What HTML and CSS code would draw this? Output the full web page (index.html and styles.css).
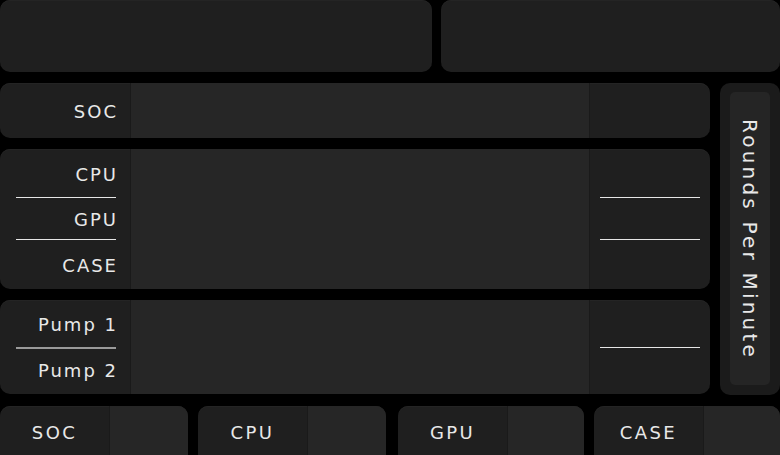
FILE: index.html
```html
<!DOCTYPE html>
<html>
<head>
<meta charset="utf-8">
<link rel="stylesheet" href="styles.css">
</head>
<body>
<div class="page">
  <div class="top">
    <div class="card tile"></div>
    <div class="card tile"></div>
  </div>
  <div class="main">
    <div class="left">
      <div class="card group g1">
        <div class="labels">
          <div class="lab"><span>SOC</span></div>
        </div>
        <div class="mid"></div>
        <div class="vals">
          <div class="val"></div>
        </div>
      </div>
      <div class="card group g3">
        <div class="labels">
          <div class="lab r1"><span>CPU</span></div>
          <div class="lab r2 sep"><span>GPU</span></div>
          <div class="lab sep"><span>CASE</span></div>
        </div>
        <div class="mid"></div>
        <div class="vals">
          <div class="val r1"></div>
          <div class="val r2 sep"></div>
          <div class="val sep"></div>
        </div>
      </div>
      <div class="card group g2">
        <div class="labels">
          <div class="lab p1"><span>Pump 1</span></div>
          <div class="lab p2 sep grey"><span>Pump 2</span></div>
        </div>
        <div class="mid"></div>
        <div class="vals">
          <div class="val p1"></div>
          <div class="val sep"></div>
        </div>
      </div>
    </div>
    <div class="rpm">
      <div class="rpm-inner"><span class="rpm-text">Rounds Per Minute</span></div>
    </div>
  </div>
  <div class="bottom">
    <div class="card chip"><div class="chip-lab">SOC</div><div class="chip-val"></div></div>
    <div class="card chip"><div class="chip-lab">CPU</div><div class="chip-val"></div></div>
    <div class="card chip chip-gpu"><div class="chip-lab">GPU</div><div class="chip-val"></div></div>
    <div class="card chip chip-sm"><div class="chip-lab">CASE</div><div class="chip-val"></div></div>
  </div>
</div>
</body>
</html>
```

FILE: styles.css
```css
* { box-sizing: border-box; }
html, body {
  margin: 0;
  padding: 0;
  background: #000;
  overflow: hidden;
}
body {
  width: 780px;
  height: 455px;
  font-family: "DejaVu Sans", "Liberation Sans", sans-serif;
  color: #e8e8e8;
}
.page {
  display: flex;
  flex-direction: column;
}
.card {
  background: #1f1f1f;
  border-radius: 10px;
  box-shadow: inset 0 1px 0 #242424;
  overflow: hidden;
}
.top {
  display: grid;
  grid-template-columns: 432px 1fr;
  gap: 9px;
  height: 72px;
}
.main {
  display: flex;
  gap: 10px;
  margin-top: 11px;
  height: 312px;
}
.left {
  width: 710px;
  display: flex;
  flex-direction: column;
  gap: 11px;
}
.group {
  display: flex;
}
.g1 { height: 55px; }
.g3 { height: 140px; }
.g2 { height: 94px; }
.labels {
  width: 131px;
  border-right: 1px solid #1a1a1a;
  display: flex;
  flex-direction: column;
  padding: 0 14px 0 16px;
}
.lab {
  flex: 1;
  display: flex;
  align-items: center;
  justify-content: flex-end;
  font-size: 18px;
  letter-spacing: 2px;
  padding-top: 2px;
}
.lab span { margin-right: -2px; }
.r1 { flex: 0 0 48px; }
.r2 { flex: 0 0 42px; }
.p1 { flex: 0 0 47px; }
.lab.p2 { padding-top: 0; padding-bottom: 3px; }
.sep { border-top: 1.5px solid #e6e6e6; }
.lab.grey { border-top: 2px solid #9a9a9a; }
.mid {
  flex: 1;
  background: #262626;
  border-right: 1px solid #1a1a1a;
}
.vals {
  width: 120px;
  display: flex;
  flex-direction: column;
  padding: 0 10px;
}
.val { flex: 1; }
.val.r1 { flex: 0 0 48px; }
.val.r2 { flex: 0 0 42px; }
.val.p1 { flex: 0 0 47px; }
.rpm {
  flex: 1;
  background: #1b1b1b;
  border-radius: 10px;
  padding: 9px 10px 10px 10px;
  display: flex;
}
.rpm-inner {
  flex: 1;
  background: #252525;
  border-radius: 5px;
  display: flex;
  align-items: center;
  justify-content: center;
}
.rpm-text {
  writing-mode: vertical-rl;
  font-size: 20px;
  letter-spacing: 3.2px;
  white-space: nowrap;
  margin-top: 3px;
}
.bottom {
  display: flex;
  gap: 10px;
  margin-top: 11px;
  height: 58px;
}
.chip {
  display: flex;
  width: 188px;
  flex: none;
}
.chip-gpu { margin-left: 2px; width: 186px; }
.chip-sm { width: 186px; }
.chip-lab {
  width: 110px;
  border-right: 1px solid #1a1a1a;
  display: flex;
  align-items: center;
  justify-content: center;
  font-size: 18px;
  letter-spacing: 2.4px;
  padding-bottom: 6px;
}
.chip-val {
  flex: 1;
  background: #262626;
}
```
